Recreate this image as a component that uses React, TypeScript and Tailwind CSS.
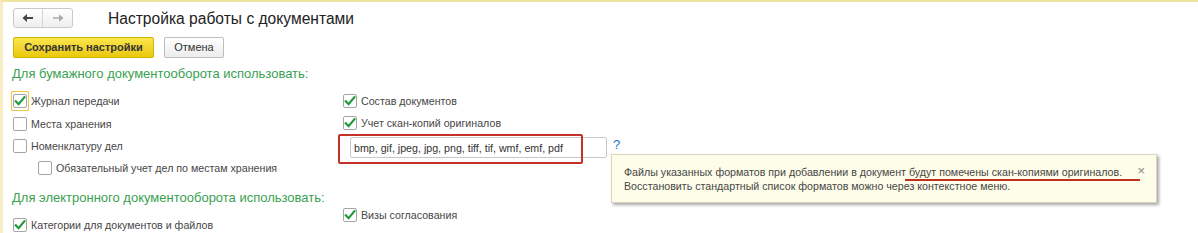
import React from 'react';

const font = { fontFamily: '"Liberation Sans", Arial, sans-serif' };

const Check: React.FC<{ checked?: boolean; focused?: boolean }> = ({ checked, focused }) => (
  <span
    className={
      'flex h-5 w-[18px] shrink-0 items-center justify-center rounded-[1px] border ' +
      (focused ? 'border-[#f2c438]' : 'border-transparent')
    }
  >
    <span className="flex h-[14px] w-[14px] items-center justify-center rounded-[2px] border border-[#a5a5a5] bg-white">
      {checked && (
        <svg width="12" height="12" viewBox="0 0 12 12">
          <path d="M1.8 6.2 L4.6 9.2 L10.4 2.2" fill="none" stroke="#1f9a3a" strokeWidth="2.2" strokeLinecap="square" />
        </svg>
      )}
    </span>
  </span>
);

const Row: React.FC<{ label: string; checked?: boolean; focused?: boolean; className?: string }> = ({
  label,
  checked,
  focused,
  className,
}) => (
  <div className={'flex h-[22px] items-center ' + (className ?? '')}>
    <Check checked={checked} focused={focused} />
    <span className="ml-[2px] whitespace-nowrap text-[10.67px] text-[#474747]">{label}</span>
  </div>
);

export default function App() {
  return (
    <div
      className="relative h-[233px] w-[1198px] overflow-hidden border-l-[3px] border-t-2 border-l-[#f6edc3] border-t-[#f1e3a2] bg-white"
      style={font}
    >
      {/* header */}
      <div className="flex h-[30px] items-center pl-[10px] pt-[2px]">
        <div className="flex h-[20px] w-[60px] overflow-hidden rounded-[3px] border border-[#c9c9c9] bg-gradient-to-b from-white to-[#efefef]">
          <div className="flex w-[30px] items-center justify-center border-r border-[#d6d6d6]">
            <svg width="12" height="10" viewBox="0 0 12 10">
              <path d="M11 5 H4" stroke="#444" strokeWidth="2" />
              <path d="M0.5 5 L5 1 V9 Z" fill="#444" />
            </svg>
          </div>
          <div className="flex w-[30px] items-center justify-center">
            <svg width="12" height="10" viewBox="0 0 12 10">
              <path d="M1 5 H8" stroke="#aaa" strokeWidth="1.6" />
              <path d="M11.5 5 L7 1.2 V8.8 Z" fill="#aaa" />
            </svg>
          </div>
        </div>
        <h1 className="ml-[35px] mt-[2px] text-[15.6px] text-[#222]">Настройка работы с документами</h1>
      </div>

      {/* buttons */}
      <div className="mt-[5px] flex gap-[10px] pl-[10px]">
        <button className="h-[21px] w-[141px] rounded-[2px] border border-[#d0b400] bg-gradient-to-b from-[#fbe64a] to-[#eac800] text-[11px] font-bold text-[#333]">
          Сохранить настройки
        </button>
        <button className="h-[21px] w-[60px] rounded-[2px] border border-[#bdbdbd] bg-gradient-to-b from-white to-[#ececec] text-[11px] text-[#333]">
          Отмена
        </button>
      </div>

      <div className="mt-[6px] whitespace-nowrap pl-[9px] text-[13px] leading-[20px] text-[#3a9f52]">
        Для бумажного документооборота использовать:
      </div>

      <div className="mt-[6px] flex pl-[8px]">
        {/* left column */}
        <div className="w-[330px]">
          <Row label="Журнал передачи" checked focused />
          <Row label="Места хранения" className="mt-[1px]" />
          <Row label="Номенклатуру дел" />
          <Row label="Обязательный учет дел по местам хранения" className="ml-[25px]" />
          <div className="mt-[9px] whitespace-nowrap pl-[1px] text-[13px] leading-[20px] text-[#3a9f52]">
            Для электронного документооборота использовать:
          </div>
          <Row label="Категории для документов и файлов" checked className="mt-[6px]" />
        </div>

        {/* right column */}
        <div>
          <Row label="Состав документов" checked />
          <Row label="Учет скан-копий оригиналов" checked />
          <div className="relative mt-[3px] flex items-start pl-[9px]">
            <div className="flex h-[21px] w-[257px] items-center rounded-[2px] border border-[#c8c8c8] bg-white pl-[3px] text-[10.67px] text-[#333]">
              bmp, gif, jpeg, jpg, png, tiff, tif, wmf, emf, pdf
            </div>
            <span className="ml-[6px] text-[13px] leading-[16px] text-[#2a72c8]">?</span>
            <div className="absolute left-[-3px] top-[-3px] h-[30px] w-[245px] rounded-[2px] border-2 border-[#c33128]" />
          </div>
          <Row label="Визы согласования" checked className="mt-[46px]" />
        </div>
      </div>

      {/* tooltip */}
      <div className="absolute left-[608px] top-[152px] w-[546px] border border-[#d9d5b9] bg-[#fdfde9] pb-[9px] pl-[12px] pr-[12px] pt-[10px] text-[10.67px] leading-[14px] text-[#474747] shadow-[2px_2px_3px_rgba(0,0,0,0.35)]">
        <div className="whitespace-nowrap">
          Файлы указанных форматов при добавлении в документ
          <span className="relative">
            {' '}будут помечены скан-копиями оригиналов.
            <span className="absolute bottom-[-3px] left-[-1px] right-[-18px] h-[2px] bg-[#c0301e]" />
          </span>
        </div>
        <div className="whitespace-nowrap">Восстановить стандартный список форматов можно через контекстное меню.</div>
        <span className="absolute right-[11px] top-[9px] text-[13px] leading-[14px] text-[#888]">×</span>
      </div>
    </div>
  );
}
